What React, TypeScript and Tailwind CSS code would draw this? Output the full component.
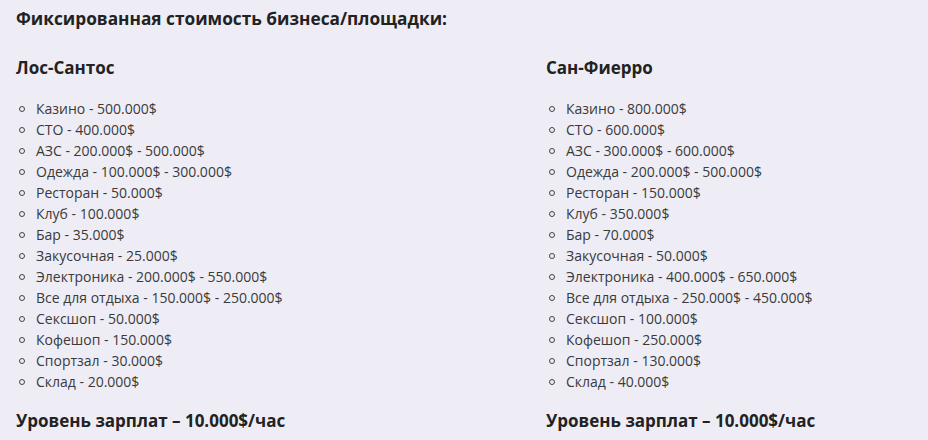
import React from 'react';

const losSantos = [
  'Казино - 500.000$',
  'СТО - 400.000$',
  'АЗС - 200.000$ - 500.000$',
  'Одежда - 100.000$ - 300.000$',
  'Ресторан - 50.000$',
  'Клуб - 100.000$',
  'Бар - 35.000$',
  'Закусочная - 25.000$',
  'Электроника - 200.000$ - 550.000$',
  'Все для отдыха - 150.000$ - 250.000$',
  'Сексшоп - 50.000$',
  'Кофешоп - 150.000$',
  'Спортзал - 30.000$',
  'Склад - 20.000$',
];

const sanFierro = [
  'Казино - 800.000$',
  'СТО - 600.000$',
  'АЗС - 300.000$ - 600.000$',
  'Одежда - 200.000$ - 500.000$',
  'Ресторан - 150.000$',
  'Клуб - 350.000$',
  'Бар - 70.000$',
  'Закусочная - 50.000$',
  'Электроника - 400.000$ - 650.000$',
  'Все для отдыха - 250.000$ - 450.000$',
  'Сексшоп - 100.000$',
  'Кофешоп - 250.000$',
  'Спортзал - 130.000$',
  'Склад - 40.000$',
];

function CityColumn({ name, items }: { name: string; items: string[] }) {
  return (
    <div>
      <h3 className="text-[17px] leading-[24px] font-bold text-[#222]">{name}</h3>
      <ul className="mt-[18px]">
        {items.map((item) => (
          <li key={item} className="flex items-center h-[21px] text-[14px] text-[#3a3a3a]">
            <span className="w-[6px] h-[6px] ml-[3px] mr-[11px] rounded-full border border-[#444] flex-shrink-0" />
            <span>{item}</span>
          </li>
        ))}
      </ul>
      <h3 className="mt-[17px] text-[17px] leading-[24px] font-bold text-[#222]">Уровень зарплат – 10.000$/час</h3>
    </div>
  );
}

export default function App() {
  return (
    <div className="w-[928px] h-[440px] overflow-hidden bg-[#eeedf6] px-4 pt-[7px] font-['Open_Sans',sans-serif]">
      <h2 className="text-[17.25px] leading-[24px] font-bold text-[#222]">Фиксированная стоимость бизнеса/площадки:</h2>
      <div className="mt-[25px] grid grid-cols-[530px_1fr]">
        <CityColumn name="Лос-Сантос" items={losSantos} />
        <CityColumn name="Сан-Фиерро" items={sanFierro} />
      </div>
    </div>
  );
}
